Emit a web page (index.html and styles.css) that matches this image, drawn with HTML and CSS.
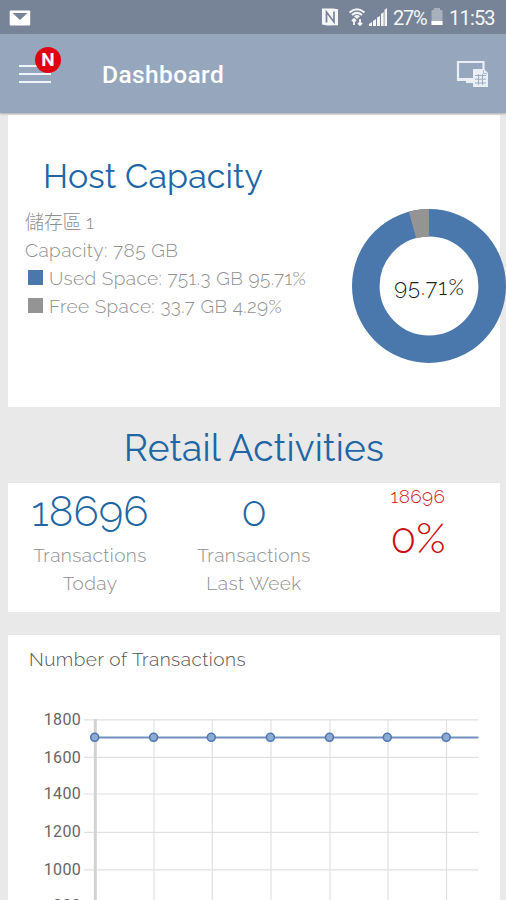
FILE: index.html
```html
<!DOCTYPE html>
<html lang="en">
<head>
<meta charset="utf-8">
<title>Dashboard</title>
<link rel="stylesheet" href="styles.css">
</head>
<body>
<div class="status">
  <svg class="mail" width="22" height="16" viewBox="0 0 22 16"><rect x=".7" y=".5" width="20.5" height="15" rx="1" fill="#fff"/><path d="M3.500 3h15L11 10z" fill="#778497"/></svg>
  <div class="tray">
    <svg width="18" height="18" viewBox="0 0 18 18"><path d="M1 .5h11l5 .8v16L6 17.500 1 16.500z" fill="#f4f6f8"/><path d="M5.500 14.500V4l7.500 10V3.500" fill="none" stroke="#778497" stroke-width="1.700"/></svg>
    <svg class="wifi" width="18" height="18" viewBox="0 0 18 18"><path d="M1.500 4.500Q9-2 16.500 4.500M4 7Q9 2.700 14 7" fill="none" stroke="#f4f6f8" stroke-width="2"/><path d="M6 8.200q3-2.300 6 0L9 11z" fill="#f4f6f8"/><path d="M6 17v-5M12 11v6M4 13l2-2 2 2M10 15l2 2 2-2" fill="none" stroke="#f4f6f8" stroke-width="1.800"/></svg>
    <svg class="signal" width="18" height="18" viewBox="0 0 18 18"><path d="M0 18v-2l3-2v4zM4 18v-5l3-2v7zM8 18V9.500L11 8v10zM12 18V6l2.700-2v14zM15.500 18V2L18 0v18z" fill="#f4f6f8"/></svg>
    <span class="pct">27%</span>
    <svg class="battery" width="12" height="18" viewBox="0 0 12 18"><path d="M3 2V0h6v2h1.500q1 0 1 1v13.500H.5V3q0-1 1-1z" fill="#a7b0bc"/><path d="M.5 13h11v4H.5z" fill="#fff"/></svg>
    <span class="time">11:53</span>
  </div>
</div>
<header class="bar">
  <div class="menu"><i></i><i></i><i></i><b class="badge">N</b></div>
  <h1>Dashboard</h1>
  <svg class="device" width="33" height="28" viewBox="0 0 33 28"><path d="M15 19.500H2V2h25.500v8" fill="none" stroke="#e9eff5" stroke-width="2.200"/><path d="M1 18h16v3H1zM10 20h7v3h-7z" fill="#e9eff5"/><path d="M17 9h11l4 4v14H17z" fill="#e9eff5"/><path d="M19 15.500h11M19 19.200h11M19 23h11M22.500 14v11M26.500 14v11" stroke="#9daec2" stroke-width="1"/><path d="M27.500 10v3.500H31" fill="none" stroke="#9daec2" stroke-width=".8"/></svg>
</header>
<main>
  <section class="card host">
    <div class="info">
      <h2>Host Capacity</h2>
      <p>儲存區 1</p>
      <p>Capacity: 785 GB</p>
      <p><i class="box used"></i>Used Space: 751.3 GB 95.71%</p>
      <p><i class="box free"></i>Free Space: 33.7 GB 4.29%</p>
    </div>
    <svg class="donut" width="156" height="156" viewBox="-78 -78 156 156">
      <circle r="63.200" fill="none" stroke="#4a78ad" stroke-width="27.600"/>
      <path d="M0-63.200A63.200 63.200 0 0 0-16.500-61" fill="none" stroke="#949494" stroke-width="27.600"/>
      <text x="0.500" y="8.500" text-anchor="middle">95.71%</text>
    </svg>
  </section>
  <h2 class="retail">Retail Activities</h2>
  <section class="card stats">
    <div class="stat"><strong>18696</strong><span>Transactions<br>Today</span></div>
    <div class="stat"><strong>0</strong><span>Transactions<br>Last Week</span></div>
    <div class="stat red"><em>18696</em><strong>0%</strong></div>
  </section>
  <section class="card chart">
    <h3>Number of Transactions</h3>
    <svg class="plot" width="492" height="200" viewBox="8 700 492 200">
      <g class="grid"><path d="M84 719.800H478.500M84 757.300H478.500M84 794H478.500M84 832.300H478.500M84 869.800H478.500"/><path d="M154 719V900M212.300 719V900M271 719V900M330 719V900M388 719V900M446.500 719V900"/></g>
      <path class="axis" d="M95.300 719V900"/>
      <path class="line" d="M95 737.500H478.500"/>
      <g class="dots"><circle cx="94.700" cy="737.300" r="4"/><circle cx="153.600" cy="737.300" r="4"/><circle cx="211.300" cy="737.300" r="4"/><circle cx="270.400" cy="737.300" r="4"/><circle cx="329.500" cy="737.300" r="4"/><circle cx="387.300" cy="737.300" r="4"/><circle cx="446.200" cy="737.300" r="4"/></g>
      <g class="ticks"><text x="81" y="724.500">1800</text><text x="81" y="762.500">1600</text><text x="81" y="799.200">1400</text><text x="81" y="837.200">1200</text><text x="81" y="875">1000</text><text x="81" y="911">800</text></g>
    </svg>
  </section>
</main>
</body>
</html>
```
FILE: styles.css
```css
* { box-sizing: border-box; margin: 0; padding: 0; }
html, body { width: 506px; height: 900px; overflow: hidden; }
body { background: #e9e9e9; font-family: Raleway, Lato, "Noto Sans CJK TC", sans-serif; color: #999; }
svg { display: block; flex: none; }
.status { height: 34px; background: #778497; display: flex; align-items: center; justify-content: space-between; padding: 0 11px 0 9px; }
.mail { margin-top: 1px; }
.tray { display: flex; align-items: center; color: #f4f6f8; font: 20px/34px Roboto, sans-serif; }
.tray span { position: relative; top: 1px; }
.wifi { margin-left: 9px; }
.signal { margin-left: 3px; }
.pct { width: 36px; margin-left: 6px; letter-spacing: -1.2px; white-space: nowrap; }
.battery { margin-left: 2px; }
.time { margin-left: 6px; width: 46px; letter-spacing: -.8px; white-space: nowrap; }
.bar { height: 79px; background: #96a7bd; display: flex; align-items: center; padding: 1px 17px 0 19px; box-shadow: 0 1px 2px #aaa; position: relative; }
.menu { position: relative; width: 32px; display: grid; gap: 6px; }
.menu i { height: 2px; background: #eef3f8; }
.badge { position: absolute; left: 16px; top: -18px; width: 26px; height: 26px; border-radius: 50%; background: #e1000f; color: #fff; font: bold 19px/26px Roboto, sans-serif; text-align: center; }
h1 { font: 500 24.5px/32px Roboto, sans-serif; color: #fff; margin: 2px 0 0 51px; flex: 1; letter-spacing: .4px; }
main { padding: 2px 6px 0 8px; }
.card { background: #fff; }
h2 { font-weight: 400; font-size: 34px; line-height: 44px; color: #2066a5; }
.host { height: 292px; display: flex; justify-content: space-between; }
.info { padding: 39px 0 0 17px; white-space: nowrap; }
.info h2 { padding-left: 18px; margin-bottom: 10px; letter-spacing: .1px; }
.info p { font-size: 19px; font-weight: 300; line-height: 28px; height: 28px; display: flex; align-items: center; letter-spacing: .4px; color: #909090; }
.info p:nth-of-type(1) { letter-spacing: -.2px; }
.box { width: 15px; height: 15px; margin: -2px 6px 0 3px; }
.used { background: #4a78ad; }
.free { background: #949494; }
.donut { margin: 93px -7px 0 0; }
.donut text { font-size: 22px; font-weight: 300; fill: #222; letter-spacing: 1.1px; }
.retail { height: 76px; line-height: 82px; font-size: 37px; text-align: center; letter-spacing: .25px; }
.stats { height: 129px; display: grid; grid-template-columns: repeat(3, 164px); text-align: center; }
.stat { display: flex; flex-direction: column; }
.stat strong { font-weight: 300; font-size: 42px; line-height: 58px; color: #2066a5; }
.stat span { font-size: 19px; font-weight: 300; line-height: 28px; letter-spacing: .45px; color: #909090; }
.stat em { font-style: normal; font-weight: 300; font-size: 19px; line-height: 27px; color: #c81c20; letter-spacing: .4px; }
.red strong { color: #c80f14; }
.chart { margin-top: 23px; height: 265px; }
h3 { height: 65px; padding: 10px 21px; font-size: 19px; line-height: 28px; font-weight: 300; color: #555; letter-spacing: .5px; }
.grid { stroke: #e1e1e1; stroke-width: 1.2; fill: none; }
.axis { stroke: #d2d2d2; stroke-width: 3; }
.line { stroke: #7291c0; stroke-width: 1.8; }
.dots { fill: #8eabd1; stroke: #4f78b0; stroke-width: 1.6; }
.ticks { font: 16px Roboto, sans-serif; fill: #666; text-anchor: end; letter-spacing: .3px; }
```
